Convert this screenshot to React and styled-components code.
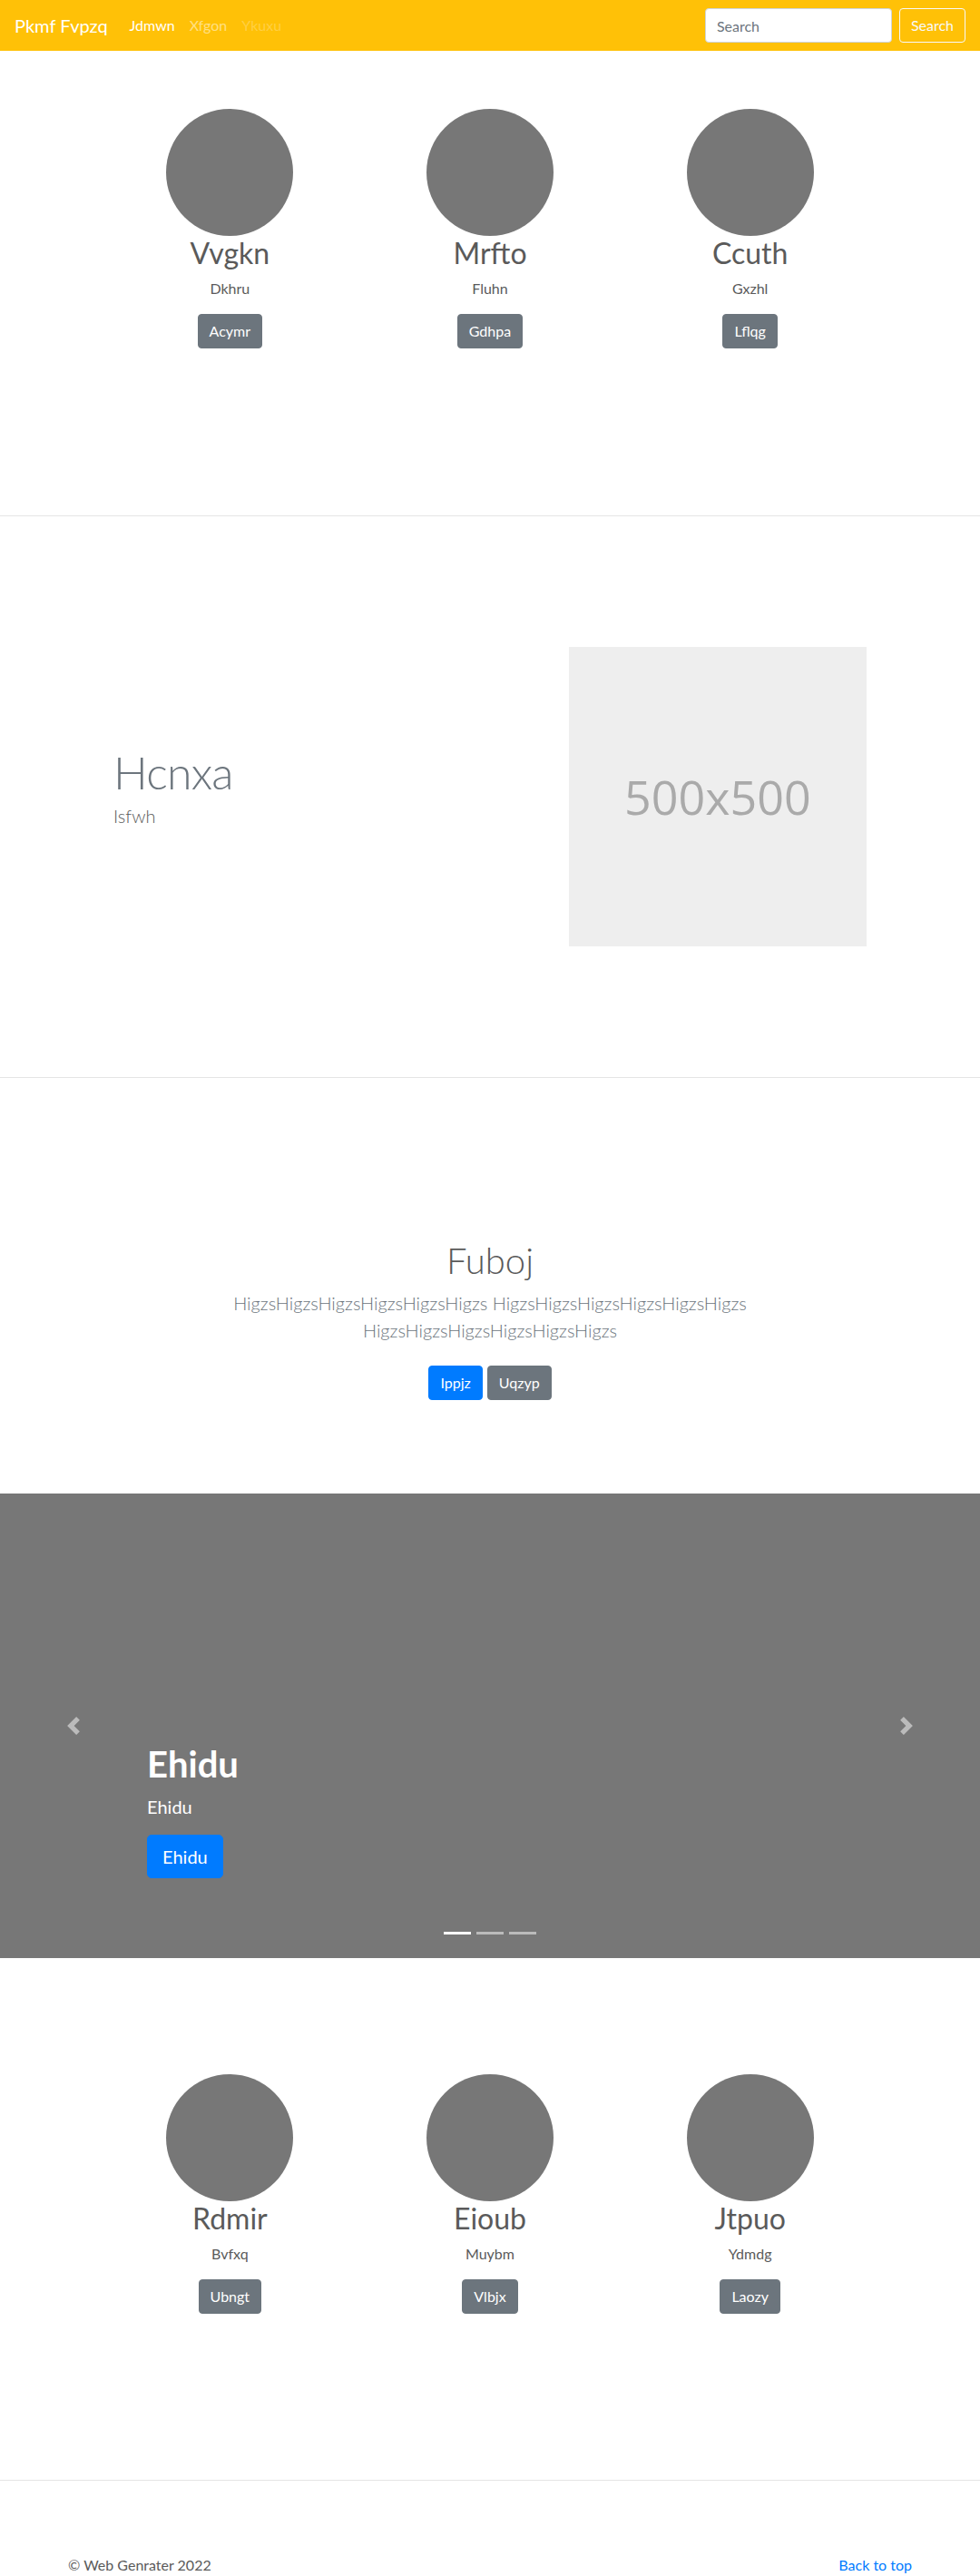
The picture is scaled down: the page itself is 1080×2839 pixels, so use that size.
import React from 'react';
import styled, { createGlobalStyle, css } from 'styled-components';

const GlobalStyle = createGlobalStyle`
  * { box-sizing: border-box; }
  body {
    margin: 0;
    font-family: Lato, "Segoe UI", Roboto, Arial, sans-serif;
    font-size: 16px;
    line-height: 1.5;
    color: #5a5a5a;
    background: #fff;
  }
`;

const Navbar = styled.nav`
  height: 56px;
  background: #ffc107;
  display: flex;
  align-items: center;
  padding: 0 16px;
`;

const Brand = styled.a`
  font-size: 20px;
  line-height: 30px;
  color: #fff;
  margin-right: 16px;
  text-decoration: none;
`;

const NavList = styled.ul`
  display: flex;
  list-style: none;
  margin: 0;
  padding: 0;
  flex: 1;
`;

const linkColors = {
  active: '#fff',
  normal: 'rgba(255, 255, 255, 0.5)',
  disabled: 'rgba(255, 255, 255, 0.25)',
};

const NavLink = styled.a`
  display: block;
  padding: 8px;
  color: ${p => linkColors[p.$state || 'normal']};
  text-decoration: none;
`;

const SearchForm = styled.form`
  display: flex;
  align-items: center;
`;

const SearchInput = styled.input`
  width: 206px;
  height: 38px;
  margin-right: 8px;
  padding: 6px 12px;
  font-family: inherit;
  font-size: 16px;
  color: #495057;
  background: #fff;
  border: 1px solid #ced4da;
  border-radius: 4px;

  &::placeholder {
    color: #6c757d;
  }
`;

const OutlineButton = styled.button`
  height: 38px;
  padding: 6px 12px;
  font-family: inherit;
  font-size: 16px;
  line-height: 24px;
  color: #f8f9fa;
  background: transparent;
  border: 1px solid #f8f9fa;
  border-radius: 4px;
`;

const variants = {
  primary: '#007bff',
  secondary: '#6c757d',
};

const Button = styled.a`
  display: inline-block;
  padding: 6px 12px;
  font-size: 16px;
  line-height: 24px;
  color: #fff;
  background: ${p => variants[p.$variant || 'secondary']};
  border: 1px solid ${p => variants[p.$variant || 'secondary']};
  border-radius: 4px;
  text-decoration: none;

  ${p => p.$large && css`
    padding: 8px 16px;
    font-size: 20px;
    line-height: 30px;
    border-radius: 5px;
  `}
`;

const Divider = styled.hr`
  margin: 0;
  border: 0;
  border-top: 1px solid rgba(0, 0, 0, 0.1);
`;

/* three circles row */
const CardsSection = styled.section`
  padding: ${p => p.$top}px 0 ${p => p.$bottom}px;
`;

const CardsRow = styled.div`
  width: 860px;
  margin: 0 auto;
  display: grid;
  grid-template-columns: repeat(3, 1fr);
`;

const Card = styled.div`
  display: flex;
  flex-direction: column;
  align-items: center;
  text-align: center;
`;

const Avatar = styled.div`
  width: 140px;
  height: 140px;
  border-radius: 50%;
  background: #777;
`;

const CardTitle = styled.h2`
  margin: 0 0 8px;
  font-size: 32px;
  font-weight: 400;
  line-height: 38px;
`;

const CardText = styled.p`
  margin: 0 0 16px;
  font-size: 16px;
`;

/* featurette */
const Featurette = styled.section`
  padding: 144px 0;
`;

const FeatureRow = styled.div`
  width: 860px;
  margin: 0 auto;
  display: grid;
  grid-template-columns: 7fr 5fr;
  align-items: center;
`;

const FeatureText = styled.div`
  padding: 0 15px;
`;

const FeatureHeading = styled.h2`
  margin: 0 0 8px;
  font-size: 50px;
  font-weight: 300;
  line-height: 1;
  letter-spacing: -0.8px;
  color: #6c757d;
`;

const Lead = styled.p`
  margin: 0 0 16px;
  font-size: 20px;
  font-weight: 300;
  line-height: 30px;
  color: ${p => p.$muted ? '#6c757d' : 'inherit'};
`;

const FeatureMedia = styled.div`
  padding: 0 15px;
`;

const Placeholder = styled.div`
  height: 330px;
  background: #eee;
  display: flex;
  align-items: center;
  justify-content: center;
  font-family: "Open Sans", Arial, sans-serif;
  font-size: 52px;
  color: #aaa;
`;

/* jumbotron */
const Jumbo = styled.section`
  padding: 177px 0 95px;
  text-align: center;
`;

const JumboTitle = styled.h1`
  margin: 0 0 8px;
  font-size: 40px;
  font-weight: 300;
  line-height: 48px;
`;

const JumboLead = styled(Lead)`
  max-width: 700px;
  margin: 0 auto 16px;
`;

const ButtonRow = styled.div`
  display: flex;
  justify-content: center;
  gap: 5px;
  padding: 8px 0;
`;

/* carousel */
const Carousel = styled.section`
  position: relative;
  height: 512px;
  background: #777;
  display: flex;
  align-items: flex-end;
  padding: 0 15% 88px;
`;

const Caption = styled.div`
  color: #fff;
  text-align: left;
`;

const CaptionTitle = styled.h1`
  margin: 0 0 8px;
  font-size: 40px;
  font-weight: 700;
  line-height: 48px;
`;

const CaptionText = styled.p`
  margin: 0 0 16px;
  font-size: 20px;
  line-height: 30px;
`;

const Control = styled.a`
  position: absolute;
  top: 0;
  bottom: 0;
  ${p => (p.$side === 'prev' ? 'left: 0;' : 'right: 0;')}
  width: 15%;
  display: flex;
  align-items: center;
  justify-content: center;
  opacity: 0.5;
`;

const Indicators = styled.ol`
  position: absolute;
  left: 0;
  right: 0;
  bottom: 0;
  display: flex;
  justify-content: center;
  margin: 0 0 16px;
  padding: 0;
  list-style: none;
`;

const Indicator = styled.li`
  width: 30px;
  height: 3px;
  margin: 0 3px;
  box-sizing: content-box;
  border-top: 10px solid transparent;
  border-bottom: 10px solid transparent;
  background: #fff;
  background-clip: padding-box;
  opacity: ${p => (p.$active ? 1 : 0.5)};
`;

/* footer */
const Footer = styled.footer`
  max-width: 930px;
  margin: 0 auto;
  padding-top: 81px;
  display: flex;
  justify-content: space-between;
`;

const FooterText = styled.p`
  margin: 0;
  line-height: 24px;
`;

const FooterLink = styled.a`
  color: #007bff;
  text-decoration: none;
`;

const Chevron = ({ dir }) => (
  <svg width="20" height="20" viewBox="0 0 8 8" fill="#fff">
    {dir === 'prev'
      ? <path d="M5.25 0l-4 4 4 4 1.5-1.5L4.25 4l2.5-2.5L5.25 0z" />
      : <path d="M2.75 0l-1.5 1.5L3.75 4l-2.5 2.5L2.75 8l4-4-4-4z" />}
  </svg>
);

const topCards = [
  { title: 'Vvgkn', text: 'Dkhru', action: 'Acymr' },
  { title: 'Mrfto', text: 'Fluhn', action: 'Gdhpa' },
  { title: 'Ccuth', text: 'Gxzhl', action: 'Lflqg' },
];

const bottomCards = [
  { title: 'Rdmir', text: 'Bvfxq', action: 'Ubngt' },
  { title: 'Eioub', text: 'Muybm', action: 'Vlbjx' },
  { title: 'Jtpuo', text: 'Ydmdg', action: 'Laozy' },
];

const Cards = ({ items, top, bottom }) => (
  <CardsSection $top={top} $bottom={bottom}>
    <CardsRow>
      {items.map(item => (
        <Card key={item.title}>
          <Avatar />
          <CardTitle>{item.title}</CardTitle>
          <CardText>{item.text}</CardText>
          <Button href="#">{item.action}</Button>
        </Card>
      ))}
    </CardsRow>
  </CardsSection>
);

const word = 'HigzsHigzsHigzsHigzsHigzsHigzs';

export default function App() {
  return (
    <>
      <GlobalStyle />
      <Navbar>
        <Brand href="#">Pkmf Fvpzq</Brand>
        <NavList>
          <li><NavLink $state="active" href="#">Jdmwn</NavLink></li>
          <li><NavLink href="#">Xfgon</NavLink></li>
          <li><NavLink $state="disabled" href="#">Ykuxu</NavLink></li>
        </NavList>
        <SearchForm onSubmit={e => e.preventDefault()}>
          <SearchInput type="text" placeholder="Search" />
          <OutlineButton type="submit">Search</OutlineButton>
        </SearchForm>
      </Navbar>

      <Cards items={topCards} top={64} bottom={184} />
      <Divider />

      <Featurette>
        <FeatureRow>
          <FeatureText>
            <FeatureHeading>Hcnxa</FeatureHeading>
            <Lead>Isfwh</Lead>
          </FeatureText>
          <FeatureMedia>
            <Placeholder>500x500</Placeholder>
          </FeatureMedia>
        </FeatureRow>
      </Featurette>
      <Divider />

      <Jumbo>
        <JumboTitle>Fuboj</JumboTitle>
        <JumboLead $muted>{word} {word} {word}</JumboLead>
        <ButtonRow>
          <Button $variant="primary" href="#">Ippjz</Button>
          <Button href="#">Uqzyp</Button>
        </ButtonRow>
      </Jumbo>

      <Carousel>
        <Indicators>
          <Indicator $active />
          <Indicator />
          <Indicator />
        </Indicators>
        <Caption>
          <CaptionTitle>Ehidu</CaptionTitle>
          <CaptionText>Ehidu</CaptionText>
          <Button $variant="primary" $large href="#">Ehidu</Button>
        </Caption>
        <Control $side="prev" href="#"><Chevron dir="prev" /></Control>
        <Control $side="next" href="#"><Chevron dir="next" /></Control>
      </Carousel>

      <Cards items={bottomCards} top={128} bottom={183} />
      <Divider />

      <Footer>
        <FooterText>&copy; Web Genrater 2022</FooterText>
        <FooterText><FooterLink href="#">Back to top</FooterLink></FooterText>
      </Footer>
    </>
  );
}
